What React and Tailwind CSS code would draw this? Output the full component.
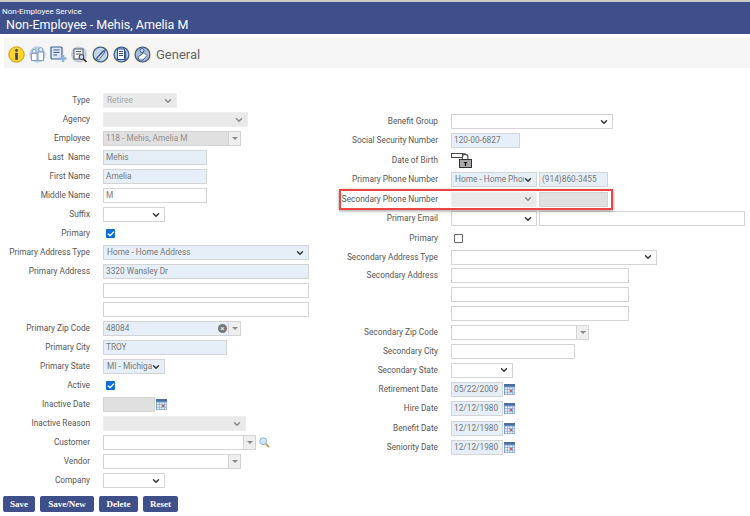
import { ChevronDown, Check } from 'lucide-react';

const font = "font-['Roboto','Noto_Sans',sans-serif]";
const blue = 'bg-[#e6eff7]';
const grey = 'bg-[#e9e9e9]';

function Chevron({ color = 'text-[#333]' }) {
    return <ChevronDown size={10} strokeWidth={3.5} className={`absolute right-[3px] top-1/2 -translate-y-1/2 ${color}`} />;
}

function Row({ label, labelW, children, h = 'h-[19px]' }) {
    return (
        <div className={`flex items-center ${h}`}>
            <div className={`${labelW} shrink-0 text-right text-[#555] whitespace-pre`}>{label}</div>
            <div className="ml-[13px] flex items-center">{children}</div>
        </div>
    );
}

function Input({ w, value = '', bg = 'bg-white' }) {
    return (
        <div className={`${w} ${bg} h-[15px] border border-[#d4d4d4] pl-[2px] leading-[13px] text-[#777] overflow-hidden whitespace-nowrap`}>
            {value}
        </div>
    );
}

function Select({ w, value = '', bg = 'bg-white', disabled = false }) {
    return (
        <div className={`${w} ${bg} relative h-[15px] border ${disabled ? 'border-[#eeeeee]' : 'border-[#d4d4d4]'} pl-[3px] pr-[12px] leading-[13px] ${disabled ? 'text-[#a5a5a5]' : 'text-[#777]'}`}>
            <div className="overflow-hidden whitespace-nowrap">{value}</div>
            <Chevron color={disabled ? 'text-[#888]' : 'text-[#333]'} />
        </div>
    );
}

function Combo({ w, value = '', bg = 'bg-white', clear = false, disabled = false }) {
    return (
        <div className={`${w} ${bg} relative flex h-[15px] border border-[#d4d4d4]`}>
            <div className={`flex-1 pl-[2px] leading-[13px] ${disabled ? 'text-[#909090]' : 'text-[#777]'}`}>{value}</div>
            {clear && (
                <div className="mr-[1px] mt-[2px] flex h-[9px] w-[9px] items-center justify-center rounded-full bg-[#777] text-[8px] leading-none text-white">×</div>
            )}
            <div className="flex w-[12px] items-center justify-center border-l border-[#d4d4d4] bg-[#eee]">
                <div className="h-0 w-0 border-x-[3px] border-t-[3px] border-x-transparent border-t-[#888]" />
            </div>
        </div>
    );
}

function Checkbox({ checked }) {
    return checked ? (
        <div className="ml-[3px] flex h-[9px] w-[9px] items-center justify-center rounded-[1px] bg-[#0b6fd8]">
            <Check size={8} strokeWidth={4} className="text-white" />
        </div>
    ) : (
        <div className="ml-[3px] h-[9px] w-[9px] rounded-[1px] border border-[#666] bg-white" />
    );
}

function CalendarIcon() {
    return (
        <svg width="11" height="11" viewBox="0 0 11 11" className="ml-[1px] shrink-0">
            <rect x="0" y="0" width="11" height="11" fill="#7f9fcb" />
            <rect x="0" y="0" width="11" height="2.5" fill="#4a6fa5" />
            <rect x="1" y="3.5" width="2" height="1.8" fill="#eaf0f8" />
            <rect x="3.6" y="3.5" width="2" height="1.8" fill="#eaf0f8" />
            <rect x="6.2" y="3.5" width="2" height="1.8" fill="#eaf0f8" />
            <rect x="8.8" y="3.5" width="1.6" height="1.8" fill="#eaf0f8" />
            <rect x="1" y="6" width="2" height="1.8" fill="#eaf0f8" />
            <rect x="3.6" y="6" width="2" height="1.8" fill="#eaf0f8" />
            <rect x="6.2" y="6" width="2" height="1.8" fill="#d9503f" />
            <rect x="8.8" y="6" width="1.6" height="1.8" fill="#eaf0f8" />
            <rect x="1" y="8.5" width="2" height="1.8" fill="#eaf0f8" />
            <rect x="3.6" y="8.5" width="2" height="1.8" fill="#eaf0f8" />
            <rect x="6.2" y="8.5" width="2" height="1.8" fill="#eaf0f8" />
            <rect x="8.8" y="8.5" width="1.6" height="1.8" fill="#eaf0f8" />
        </svg>
    );
}

function SearchIcon() {
    return (
        <svg width="11" height="11" viewBox="0 0 11 11" className="ml-[3px]">
            <circle cx="4.2" cy="4.2" r="3.4" fill="#cfe3f5" stroke="#8db5d8" />
            <path d="M6.8 6.8l3.2 3.2" stroke="#c69a5a" strokeWidth="1.8" />
        </svg>
    );
}

function LockIcon() {
    return (
        <svg width="23" height="15" viewBox="0 0 23 15">
            <rect x="0.5" y="0.5" width="11" height="4" fill="#fff" stroke="#444" />
            <path d="M11.5 2.5V0.8h3" fill="none" stroke="#444" />
            <path d="M11.5 7V4a2.7 2.7 0 0 1 5.4 0v3" fill="none" stroke="#555" strokeWidth="1.2" />
            <rect x="8.5" y="6.5" width="12" height="8" fill="#a8a8a8" stroke="#333" />
            <path d="M12.5 9h4l-1.4 1.6v2.4h-1.2v-2.4z" fill="#111" />
        </svg>
    );
}

function Round({ children, fill = '#c5d5e8', stroke = '#3f5f8f' }) {
    return (
        <svg width="17" height="17" viewBox="0 0 17 17" className="ml-[4px] shrink-0">
            <rect x="0" y="0" width="17" height="17" rx="4" fill="#fbf3d9" />
            <circle cx="8.5" cy="8.5" r="7.4" fill={fill} stroke={stroke} strokeWidth="1.3" />
            {children}
        </svg>
    );
}

function Toolbar() {
    return (
        <div className="flex items-center pt-[2px]">
            <svg width="17" height="17" viewBox="0 0 17 17" className="ml-[7px]">
                <circle cx="8.5" cy="8.5" r="7.7" fill="#fbd52b" stroke="#c79a12" />
                <circle cx="8.5" cy="4.4" r="1.4" fill="#3a3a7a" />
                <rect x="7.2" y="6.8" width="2.6" height="7" fill="#3a3a7a" />
            </svg>
            <svg width="17" height="17" viewBox="0 0 17 17" className="ml-[4px]">
                <circle cx="8.5" cy="8.5" r="8.2" fill="#bccfe6" />
                <rect x="2.5" y="7.5" width="5.5" height="7" fill="#fff" stroke="#7f9cc3" />
                <rect x="9" y="6" width="5.5" height="8.5" fill="#fff" stroke="#7f9cc3" />
                <circle cx="5.2" cy="5.3" r="2" fill="#eef3f9" stroke="#7f9cc3" />
                <circle cx="11.7" cy="3.6" r="2" fill="#eef3f9" stroke="#7f9cc3" />
            </svg>
            <svg width="17" height="17" viewBox="0 0 17 17" className="ml-[4px]">
                <rect x="1" y="1" width="11" height="12" rx="1" fill="#dbe6f3" stroke="#3e5f92" strokeWidth="1.2" />
                <path d="M3.5 4h6M3.5 6.5h6M3.5 9h3.5" stroke="#3e5f92" />
                <path d="M9.5 12.5h7M13 9v7" stroke="#8fb2de" strokeWidth="2.6" />
            </svg>
            <svg width="17" height="17" viewBox="0 0 17 17" className="ml-[4px]">
                <circle cx="8" cy="8.5" r="8" fill="#c4ced9" />
                <rect x="3" y="3" width="9" height="10" fill="#f5f5f5" stroke="#4f5c6d" />
                <path d="M5 5.5h5M5 8h5" stroke="#4f5c6d" />
                <circle cx="10.5" cy="11" r="2.4" fill="#cfe0f0" stroke="#333" />
                <path d="M12.2 12.7l3.3 3.3" stroke="#222" strokeWidth="1.6" />
            </svg>
            <Round>
                <path d="M4.5 12.5l6.5-8 2 1.6-6.5 8z" fill="#fff" stroke="#3f5f8f" />
                <path d="M3 14L14 3" stroke="#3f5f8f" strokeWidth="1.2" />
            </Round>
            <Round fill="#b5c9e2">
                <rect x="4.5" y="3" width="7" height="10.5" fill="#fff" stroke="#2f4f80" />
                <path d="M6 5.5h4M6 7.5h4M6 9.5h4" stroke="#2f4f80" />
                <path d="M12.7 5v9" stroke="#2f4f80" />
            </Round>
            <Round fill="#a9bfd9">
                <circle cx="8" cy="4.5" r="2" fill="#d5dfeb" stroke="#3f5f8f" />
                <path d="M4 11l6-4.5 3 3-4 4.5H5z" fill="#fff" stroke="#3f5f8f" />
            </Round>
            <span className="ml-[5px] text-[13px] leading-none text-[#666]">General</span>
        </div>
    );
}

const leftW = 'w-[90px]';
const rightW = 'w-[100px]';

export default function App() {
    return (
        <div className={`${font} relative h-[516px] w-[750px] overflow-hidden bg-white text-[8.3px] leading-none`}>
            <div className="h-[34px] border-t-2 border-[#c9c9c9] bg-[#3e4f8a] text-white">
                <div className="pl-[2px] pt-[5px] text-[8px] leading-[9px]">Non-Employee Service</div>
                <div className="pl-[6px] pt-[1px] text-[12.5px] leading-[15px]">Non-Employee - Mehis, Amelia M</div>
            </div>

            <div className="ml-[4px] mt-[4px] flex h-[30px] items-center bg-[#f5f5f5]">
                <div className="-ml-[3px]"><Toolbar /></div>
            </div>

            <div className="flex">
                <div className="w-[338px] pt-[23px]">
                    <Row labelW={leftW} label="Type"><Select w="w-[74px]" value="Retiree" bg={grey} disabled /></Row>
                    <Row labelW={leftW} label="Agency"><Select w="w-[145px]" bg={grey} disabled /></Row>
                    <Row labelW={leftW} label="Employee"><Combo w="w-[138px]" value="118 - Mehis, Amelia M" bg="bg-[#e0e0e0]" disabled /></Row>
                    <Row labelW={leftW} label="Last  Name"><Input w="w-[104px]" value="Mehis" bg={blue} /></Row>
                    <Row labelW={leftW} label="First Name"><Input w="w-[104px]" value="Amelia" bg={blue} /></Row>
                    <Row labelW={leftW} label="Middle Name"><Input w="w-[104px]" value="M" /></Row>
                    <Row labelW={leftW} label="Suffix"><Select w="w-[62px]" /></Row>
                    <Row labelW={leftW} label="Primary"><Checkbox checked /></Row>
                    <Row labelW={leftW} label="Primary Address Type"><Select w="w-[206px]" value="Home - Home Address" bg={blue} /></Row>
                    <Row labelW={leftW} label="Primary Address"><Input w="w-[206px]" value="3320 Wansley Dr" bg={blue} /></Row>
                    <Row labelW={leftW} label=""><Input w="w-[206px]" /></Row>
                    <Row labelW={leftW} label=""><Input w="w-[206px]" /></Row>
                    <Row labelW={leftW} label="Primary Zip Code"><Combo w="w-[138px]" value="48084" bg={blue} clear /></Row>
                    <Row labelW={leftW} label="Primary City"><Input w="w-[124px]" value="TROY" bg={blue} /></Row>
                    <Row labelW={leftW} label="Primary State"><Select w="w-[62px]" value="MI - Michigan" bg={blue} /></Row>
                    <Row labelW={leftW} label="Active"><Checkbox checked /></Row>
                    <Row labelW={leftW} label="Inactive Date"><Input w="w-[52px]" bg="bg-[#e0e0e0]" /><CalendarIcon /></Row>
                    <Row labelW={leftW} label="Inactive Reason"><Select w="w-[143px]" bg={grey} disabled /></Row>
                    <Row labelW={leftW} label="Customer"><Combo w="w-[153px]" /><SearchIcon /></Row>
                    <Row labelW={leftW} label="Vendor"><Combo w="w-[138px]" /></Row>
                    <Row labelW={leftW} label="Company"><Select w="w-[62px]" /></Row>
                    <div className="ml-[3px] mt-[6px] flex gap-[5px] font-['Liberation_Serif',serif] text-[9px] font-bold text-white">
                        <div className="flex h-[16px] w-[32px] items-center justify-center rounded-[2px] bg-[#3e4f8a]">Save</div>
                        <div className="flex h-[16px] w-[54px] items-center justify-center rounded-[2px] bg-[#3e4f8a]">Save/New</div>
                        <div className="flex h-[16px] w-[39px] items-center justify-center rounded-[2px] bg-[#3e4f8a]">Delete</div>
                        <div className="flex h-[16px] w-[35px] items-center justify-center rounded-[2px] bg-[#3e4f8a]">Reset</div>
                    </div>
                </div>

                <div className="pt-[44px]">
                    <Row labelW={rightW} label="Benefit Group"><Select w="w-[162px]" /></Row>
                    <Row labelW={rightW} label="Social Security Number"><Input w="w-[69px]" value="120-00-6827" bg={blue} /></Row>
                    <Row labelW={rightW} h="h-[20px]" label="Date of Birth"><LockIcon /></Row>
                    <Row labelW={rightW} label="Primary Phone Number">
                        <Select w="w-[86px]" value="Home - Home Phone" bg={blue} />
                        <div className="ml-[2px]"><Input w="w-[69px]" value="(914)860-3455" bg={blue} /></div>
                    </Row>
                    <Row labelW={rightW} h="h-[20px]" label="Secondary Phone Number">
                        <Select w="w-[86px]" bg={grey} disabled />
                        <div className="ml-[2px]"><Input w="w-[69px]" bg="bg-[#e0e0e0]" /></div>
                    </Row>
                    <Row labelW={rightW} label="Primary Email">
                        <Select w="w-[86px]" />
                        <div className="ml-[2px]"><Input w="w-[206px]" /></div>
                    </Row>
                    <Row labelW={rightW} h="h-[20px]" label="Primary"><Checkbox /></Row>
                    <Row labelW={rightW} h="h-[18px]" label="Secondary Address Type"><Select w="w-[206px]" /></Row>
                    <Row labelW={rightW} label="Secondary Address"><Input w="w-[178px]" /></Row>
                    <Row labelW={rightW} label=""><Input w="w-[178px]" /></Row>
                    <Row labelW={rightW} label=""><Input w="w-[178px]" /></Row>
                    <Row labelW={rightW} label="Secondary Zip Code"><Combo w="w-[138px]" /></Row>
                    <Row labelW={rightW} h="h-[18px]" label="Secondary City"><Input w="w-[124px]" /></Row>
                    <Row labelW={rightW} h="h-[20px]" label="Secondary State"><Select w="w-[62px]" /></Row>
                    <Row labelW={rightW} label="Retirement Date"><Input w="w-[52px]" value="05/22/2009" bg={blue} /><CalendarIcon /></Row>
                    <Row labelW={rightW} label="Hire Date"><Input w="w-[52px]" value="12/12/1980" bg={blue} /><CalendarIcon /></Row>
                    <Row labelW={rightW} h="h-[20px]" label="Benefit Date"><Input w="w-[52px]" value="12/12/1980" bg={blue} /><CalendarIcon /></Row>
                    <Row labelW={rightW} label="Seniority Date"><Input w="w-[52px]" value="12/12/1980" bg={blue} /><CalendarIcon /></Row>
                </div>
            </div>

            {/* red callout drawn over the secondary phone row */}
            <div className="absolute left-[339px] top-[189px] h-[21px] w-[274px] border-2 border-[#ef4444] shadow-[0_1px_3px_rgba(0,0,0,0.4)]" />
        </div>
    );
}
